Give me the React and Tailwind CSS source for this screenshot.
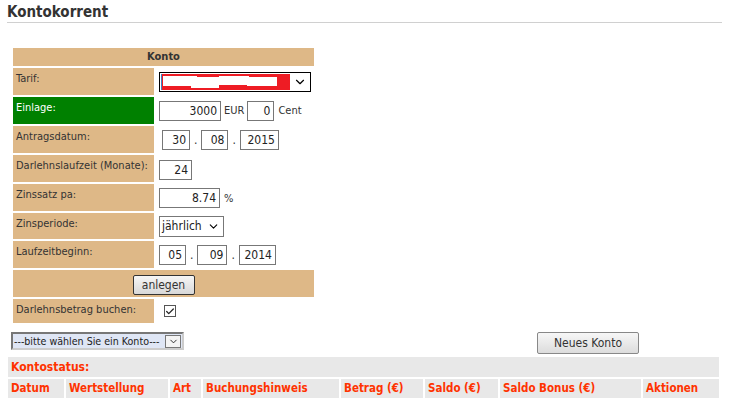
import { Check, ChevronDown } from "lucide-react";

const F = { fontFamily: '"DejaVu Sans Condensed", Tahoma, "DejaVu Sans", sans-serif' };

function Box({ value, w }) {
  return (
    <span className={`inline-block h-[20px] border border-[#777] bg-white px-[3px] text-right leading-[18px] text-[12px] text-[#222] ${w}`}>
      {value}
    </span>
  );
}

function Label({ children, green, h = "h-[27px]" }) {
  return (
    <td className={`${h} w-[142px] px-[3px] pt-[3px] align-top text-[11px] ${green ? "bg-[#008000] text-white" : "bg-[#deb887] text-[#333]"}`}>
      {children}
    </td>
  );
}

function Dot() {
  return <span className="mx-[4px] text-[12px] text-[#333]">.</span>;
}

export default function App() {
  return (
    <div className="min-h-[410px] w-[729px] bg-white text-[#333]" style={F}>
      <div className="px-[7px] pt-[3px]">
        <h1 className="text-[15px] font-bold leading-[18px] text-[#333]">Kontokorrent</h1>
        <div className="mt-[1px] h-[1px] bg-[#d0d0d0]" />
      </div>

      <table className="ml-[11px] mt-[23px] w-[305px] border-separate border-spacing-[2px]">
        <tbody>
          <tr>
            <td colSpan={2} className="h-[18px] bg-[#deb887] text-center text-[11px] font-bold leading-[18px] text-[#333]">
              Konto
            </td>
          </tr>
          <tr>
            <Label>Tarif:</Label>
            <td className="px-[3px] align-middle">
              <div className="flex h-[20px] w-[152px] items-center border border-black bg-white pl-[1px]">
                <div className="relative h-[16px] flex-1 bg-[#ee1c24]">
                  <div className="absolute left-[2px] top-[2px] h-[10px] w-[34px] bg-white" />
                  <div className="absolute left-[30px] top-[3px] h-[11px] w-[28px] bg-white" />
                  <div className="absolute left-[58px] top-[2px] h-[9px] w-[30px] bg-white" />
                  <div className="absolute left-[86px] top-[3px] h-[9px] w-[30px] bg-white" />
                  <div className="absolute left-[0px] top-0 h-[16px] w-[1px] bg-[#3b82c4]" />
                </div>
                <div className="flex w-[20px] justify-center">
                  <ChevronDown size={14} strokeWidth={2} className="text-black" />
                </div>
              </div>
            </td>
          </tr>
          <tr>
            <Label green>Einlage:</Label>
            <td className="px-[3px] align-middle text-[11px] leading-none">
              <div className="flex items-center">
                <Box value="3000" w="w-[62px]" />
                <span className="ml-[3px] mr-[3px]">EUR</span>
                <Box value="0" w="w-[27px]" />
                <span className="ml-[4px]">Cent</span>
              </div>
            </td>
          </tr>
          <tr>
            <Label>Antragsdatum:</Label>
            <td className="px-[3px] pl-[6px] align-middle">
              <div className="flex items-center">
                <Box value="30" w="w-[28px]" />
                <Dot />
                <Box value="08" w="w-[27px]" />
                <Dot />
                <Box value="2015" w="w-[39px]" />
              </div>
            </td>
          </tr>
          <tr>
            <Label>Darlehnslaufzeit (Monate):</Label>
            <td className="px-[3px] align-middle">
              <Box value="24" w="w-[33px]" />
            </td>
          </tr>
          <tr>
            <Label>Zinssatz pa:</Label>
            <td className="px-[3px] align-middle text-[11px]">
              <div className="flex items-center">
                <Box value="8.74" w="w-[61px]" />
                <span className="ml-[4px] mt-[3px]">%</span>
              </div>
            </td>
          </tr>
          <tr>
            <Label h="h-[26px]">Zinsperiode:</Label>
            <td className="px-[3px] align-middle">
              <div className="flex h-[21px] w-[65px] items-center justify-between border border-[#777] bg-white pl-[2px] pr-[3px] text-[12px] text-[#222]">
                <span>jährlich</span>
                <ChevronDown size={13} strokeWidth={2} className="text-black" />
              </div>
            </td>
          </tr>
          <tr>
            <Label>Laufzeitbeginn:</Label>
            <td className="px-[3px] align-middle">
              <div className="flex items-center">
                <Box value="05" w="w-[27px]" />
                <Dot />
                <Box value="09" w="w-[30px]" />
                <Dot />
                <Box value="2014" w="w-[37px]" />
              </div>
            </td>
          </tr>
          <tr>
            <td colSpan={2} className="h-[27px] bg-[#deb887] text-center align-middle">
              <button className="h-[20px] w-[62px] rounded-[2px] border border-[#333] bg-gradient-to-b from-[#f6f6f6] to-[#d8d8d8] text-[12px] leading-[18px] text-[#333]">
                anlegen
              </button>
            </td>
          </tr>
          <tr>
            <Label h="h-[24px]">Darlehnsbetrag buchen:</Label>
            <td className="px-[3px] pl-[8px] align-middle">
              <span className="flex h-[12px] w-[12px] items-center justify-center border border-[#555] bg-white">
                <Check size={11} strokeWidth={3} className="text-[#222]" />
              </span>
            </td>
          </tr>
        </tbody>
      </table>

      <div className="mt-[7px] flex items-start pl-[11px]">
        <div className="flex h-[18px] w-[173px] items-center border-2 border-[#777] border-b-[#ccc] border-r-[#ccc] bg-[#dfe6f5] text-[10.6px] text-[#222]">
          <span className="flex-1 whitespace-nowrap pl-[1px] leading-none">---bitte wählen Sie ein Konto---</span>
          <span className="mr-[1px] flex h-[13px] w-[16px] shrink-0 items-center justify-center border border-[#777] bg-[#f4f4f4]">
            <ChevronDown size={11} strokeWidth={2} />
          </span>
        </div>
        <button className="ml-[353px] h-[22px] w-[102px] rounded-[2px] border border-[#888] bg-gradient-to-b from-[#f7f7f7] to-[#dcdcdc] text-[12px] text-[#333]">
          Neues Konto
        </button>
      </div>

      <div className="ml-[8px] mt-[3px] w-[711px] text-[11px] font-bold text-[#ff3300]">
        <div className="h-[20px] bg-[#e8e8e8] pl-[3px] text-[12px] leading-[20px]">Kontostatus:</div>
        <div className="mt-[2px] flex h-[19px] gap-[2px] leading-[19px] text-[11.5px]">
          <div className="w-[56px] bg-[#e8e8e8] pl-[3px]">Datum</div>
          <div className="w-[102px] bg-[#e8e8e8] pl-[3px]">Wertstellung</div>
          <div className="w-[31px] bg-[#e8e8e8] pl-[3px]">Art</div>
          <div className="w-[136px] bg-[#e8e8e8] pl-[3px]">Buchungshinweis</div>
          <div className="w-[82px] bg-[#e8e8e8] pl-[3px]">Betrag (€)</div>
          <div className="w-[73px] bg-[#e8e8e8] pl-[3px]">Saldo (€)</div>
          <div className="w-[141px] bg-[#e8e8e8] pl-[3px]">Saldo Bonus (€)</div>
          <div className="flex-1 bg-[#e8e8e8] pl-[3px]">Aktionen</div>
        </div>
      </div>
    </div>
  );
}
